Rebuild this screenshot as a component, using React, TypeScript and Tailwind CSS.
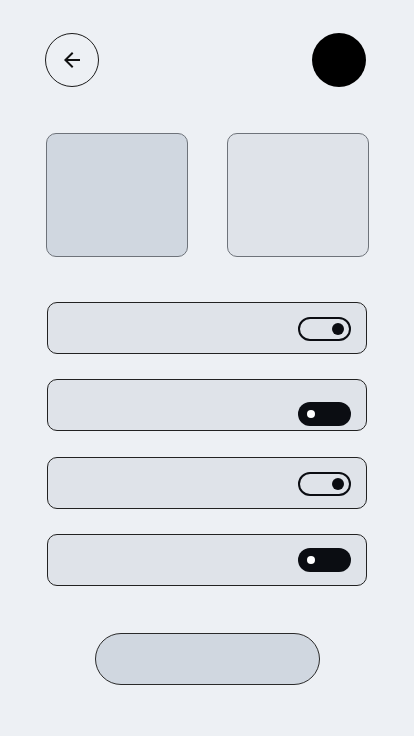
import React from "react";
import { MdArrowBack } from "react-icons/md";

function Toggle({ on, low }: { on: boolean; low?: boolean }) {
  if (on) {
    return (
      <div
        className={
          "flex h-[24px] w-[53px] items-center rounded-full bg-[#0b0d12] pl-[9px] " +
          (low ? "mt-[18px]" : "mt-0")
        }
      >
        <div className="h-[8px] w-[8px] rounded-full bg-white" />
      </div>
    );
  }
  return (
    <div className="mt-[2px] flex h-[24px] w-[53px] items-center justify-end rounded-full border-2 border-[#0b0d12] pr-[5px]">
      <div className="h-[12px] w-[12px] rounded-full bg-[#0b0d12]" />
    </div>
  );
}

function Row({ children, className }: { children: React.ReactNode; className?: string }) {
  return (
    <div
      className={
        "flex h-[52px] items-center justify-end rounded-[10px] border border-[#222] bg-[#dfe3e9] pr-[15px] " +
        (className ?? "")
      }
    >
      {children}
    </div>
  );
}

export default function App() {
  return (
    <div
      className="flex min-h-[736px] w-full flex-col bg-[#edf0f4]"
      style={{ fontFamily: "Inter, 'Noto Sans', sans-serif" }}
    >
      <div className="flex items-center justify-between pl-[45px] pr-[48px] pt-[33px]">
        <button className="flex h-[54px] w-[54px] items-center justify-center rounded-full border border-[#1a1a1a]">
          <MdArrowBack size={24} color="#111" />
        </button>
        <div className="h-[54px] w-[54px] rounded-full bg-black" />
      </div>

      <div className="mt-[46px] flex gap-[39px] pl-[46px] pr-[45px]">
        <div className="h-[124px] flex-1 rounded-[10px] border border-[#6e737a] bg-[#d0d7e0]" />
        <div className="h-[124px] flex-1 rounded-[10px] border border-[#6e737a] bg-[#dfe3e9]" />
      </div>

      <div className="mt-[45px] flex flex-col px-[47px]">
        <Row>
          <Toggle on={false} />
        </Row>
        <Row className="mt-[25px]">
          <Toggle on={true} low />
        </Row>
        <Row className="mt-[26px]">
          <Toggle on={false} />
        </Row>
        <Row className="mt-[25px]">
          <Toggle on={true} />
        </Row>
      </div>

      <div className="mt-[47px] flex justify-center">
        <button className="h-[52px] w-[225px] rounded-full border border-[#2a2a2a] bg-[#d0d7e0]" />
      </div>
    </div>
  );
}
